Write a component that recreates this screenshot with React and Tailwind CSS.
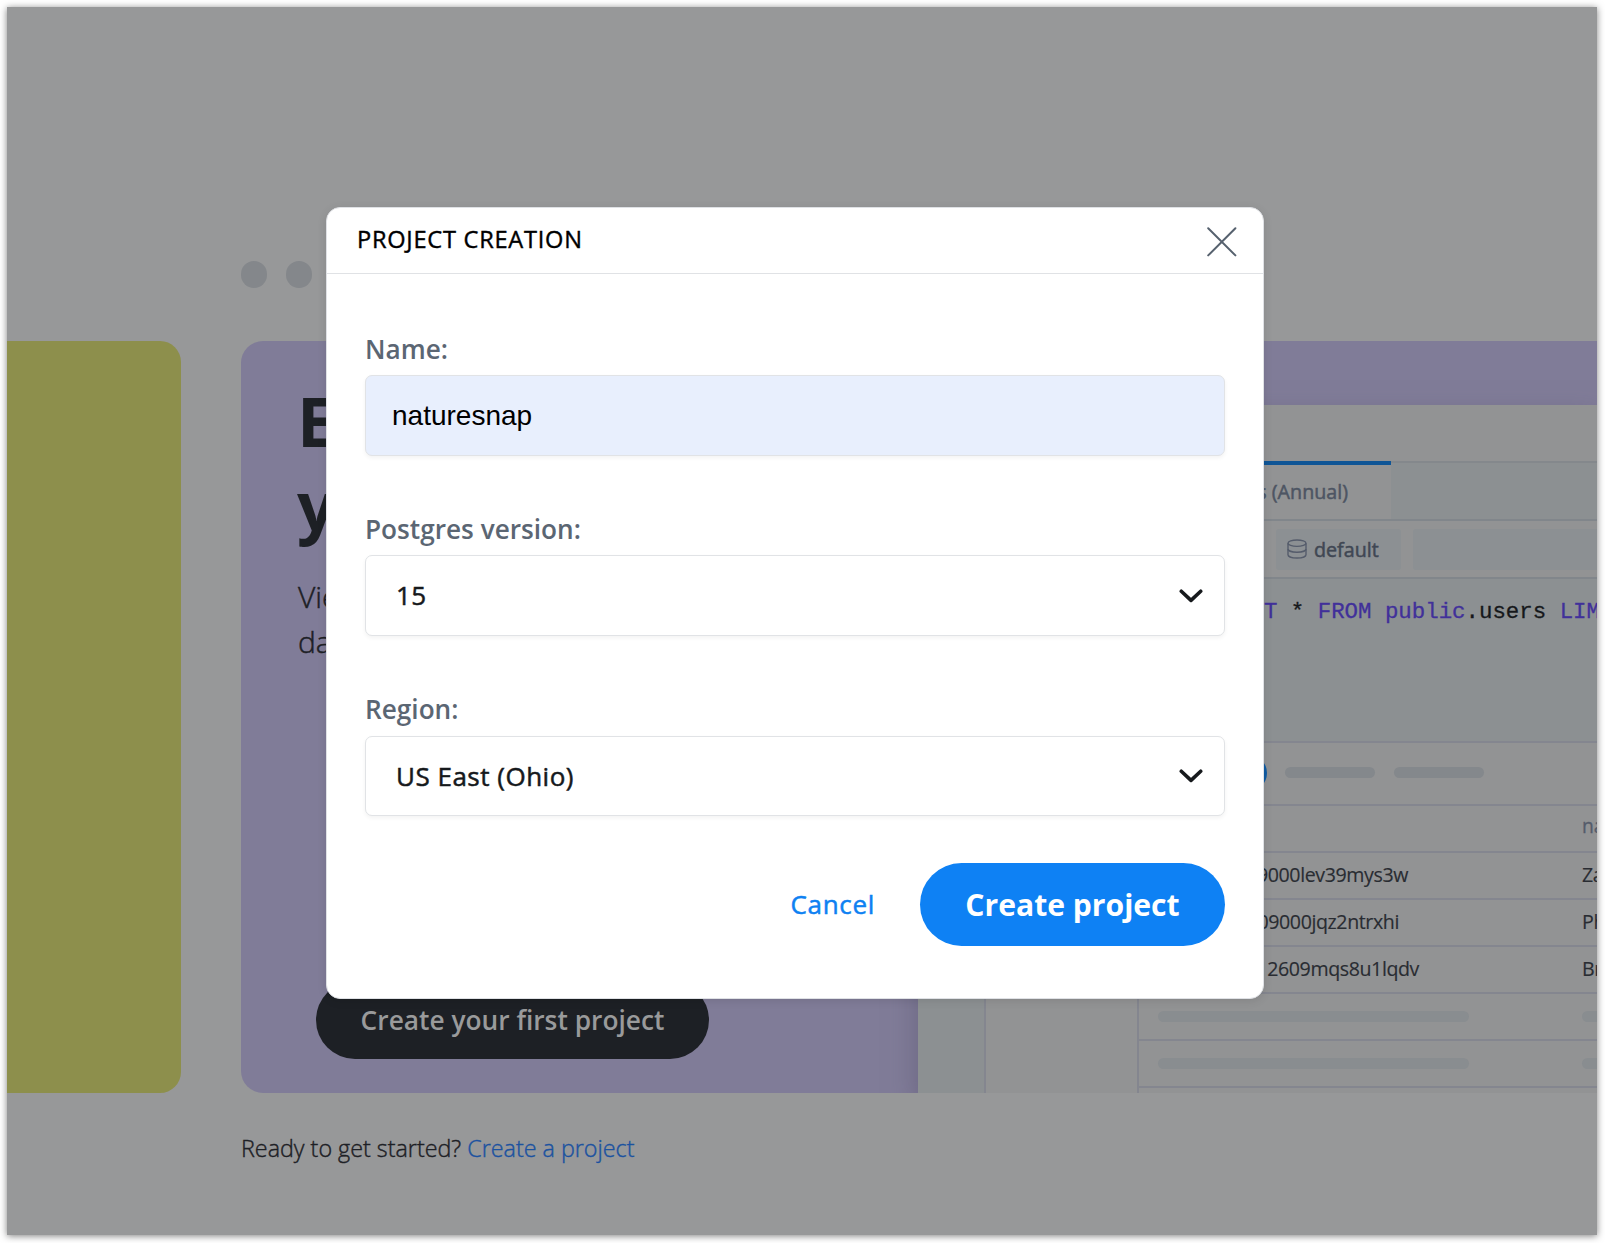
import React from "react";

const sans = "font-['Open_Sans','Noto_Sans',sans-serif]";

function Line() {
  return <div className="h-[2px] shrink-0 bg-[#84868f]" />;
}

function DatabaseIcon() {
  return (
    <svg width="20" height="20" viewBox="0 0 20 20" fill="none" stroke="#555c6b" strokeWidth="1.4" className="shrink-0">
      <ellipse cx="10" cy="4.2" rx="9" ry="3.2" />
      <path d="M1 4.2v11.6c0 1.8 4 3.2 9 3.2s9-1.4 9-3.2V4.2" />
      <path d="M1 10c0 1.8 4 3.2 9 3.2s9-1.4 9-3.2" />
    </svg>
  );
}

const rows = [
  { id: "9000lev39mys3w", pad: "pr-[51px]", name: "Zach" },
  { id: "09000jqz2ntrxhi", pad: "pr-[60px]", name: "Phil" },
  { id: "12609mqs8u1lqdv", pad: "pr-[40px]", name: "Bria" },
];

function Explorer() {
  return (
    <div className="mt-[64px] flex w-[679px] shrink-0 overflow-hidden bg-[#929394] shadow-[0_14px_26px_rgba(90,84,112,0.6)]">
      <div className="w-[68px] shrink-0 border-r-2 border-[#84868f] bg-[#8c9092]" />
      <div className="flex min-w-0 flex-1 flex-col">
        <div className="h-[56px] shrink-0" />
        <div className="flex h-[58px] shrink-0">
          <div className="flex w-[405px] items-center justify-end border-t-4 border-[#0f5596] pr-[43px] text-[19.7px] text-[#4d5563] [-webkit-text-stroke:0.5px_currentColor]">
            Users (Annual)
          </div>
          <div className="flex-1 border-t-2 border-[#84888c] bg-[#8c9092]" />
        </div>
        <div className="h-[2px] shrink-0 bg-[#81868b]" />
        <div className="flex h-[56px] shrink-0 items-center gap-[12px] pl-[290px]">
          <div className="flex h-[41px] w-[125px] items-center gap-[7px] rounded-[3px] bg-[#8c9093] pl-[11px] text-[19.7px] text-[#404753] [-webkit-text-stroke:0.5px_currentColor]">
            <DatabaseIcon />
            <span className="pt-px">default</span>
          </div>
          <div className="h-[41px] flex-1 rounded-l-[3px] bg-[#8c9093]" />
        </div>
        <div className="h-[2px] shrink-0 bg-[#81868b]" />
        <div className="h-[162px] shrink-0 whitespace-pre bg-[#8c9092] pt-[20px] pl-[278px] font-['Liberation_Mono',monospace] text-[22.4px] leading-[26px] text-[#16181b] [-webkit-text-stroke:0.3px_currentColor]">
          <span className="text-[#41309a]">T</span>
          <span> * </span>
          <span className="text-[#41309a]">FROM public</span>
          <span>.users </span>
          <span className="text-[#41309a]">LIMIT</span>
        </div>
        <Line />
        <div className="flex h-[61px] shrink-0 items-center gap-[18px] pb-[2px] pl-[245px]">
          <div className="h-[36px] w-[36px] rounded-full bg-[#0f5ba3]" />
          <div className="flex gap-[19px]">
            <div className="h-[11px] w-[90px] rounded-full bg-[#84888c]" />
            <div className="h-[11px] w-[90px] rounded-full bg-[#84888c]" />
          </div>
        </div>
        <Line />
        <div className="ml-[151px] flex min-h-0 flex-1 flex-col border-l-2 border-[#84868f]">
          <div className="flex h-[45px] shrink-0 items-center pb-[5px] pl-[443px] text-[19.3px] text-[#555c6b] [-webkit-text-stroke:0.3px_currentColor]">
            na
          </div>
          <Line />
          {rows.map((r) => (
            <React.Fragment key={r.id}>
              <div className="flex h-[45px] shrink-0 items-center pb-[2px] text-[19.6px] tracking-[-0.4px] whitespace-nowrap text-[#292c32] [-webkit-text-stroke:0.15px_currentColor]">
                <div className={`w-[320px] shrink-0 text-right ${r.pad}`}>{r.id}</div>
                <div className="w-[123px] shrink-0" />
                <div>{r.name}</div>
              </div>
              <Line />
            </React.Fragment>
          ))}
          {[0, 1].map((i) => (
            <React.Fragment key={i}>
              <div className="flex h-[45px] shrink-0 items-center gap-[113px] pl-[19px]">
                <div className="h-[11px] w-[311px] shrink-0 rounded-full bg-[#898d90]" />
                <div className="h-[11px] w-[80px] shrink-0 rounded-full bg-[#898d90]" />
              </div>
              <Line />
            </React.Fragment>
          ))}
        </div>
      </div>
    </div>
  );
}

function Chevron() {
  return (
    <svg width="24" height="14" viewBox="0 0 24 14" fill="none" stroke="#16191c" strokeWidth="3.6" strokeLinecap="round" strokeLinejoin="round">
      <path d="M2.3 2.2 12 11.4l9.7-9.2" />
    </svg>
  );
}

function Label({ children }) {
  return <div className="text-[26.2px] leading-[30px] font-semibold text-[#5b6673]">{children}</div>;
}

function Select({ label, value, className }) {
  return (
    <div>
      <Label>{label}</Label>
      <div
        className={`flex items-center justify-between rounded-[7px] border border-[#e1e3e6] bg-white pr-[21px] pl-[30px] text-[26px] tracking-[0.5px] text-[#16191c] shadow-[0_2px_4px_rgba(0,0,0,0.05)] [-webkit-text-stroke:0.5px_currentColor] ${className}`}
      >
        <span>{value}</span>
        <Chevron />
      </div>
    </div>
  );
}

function Modal() {
  return (
    <div className="absolute top-[200px] left-[319px] h-[792px] w-[938px] rounded-[14px] border border-[#dfe1e5] bg-white shadow-[0_2px_10px_rgba(0,0,0,0.1)]">
      <div className="flex h-[66px] items-center justify-between border-b border-[#e0e2e5] pr-[26px] pl-[30px]">
        <div className="pb-[2px] text-[23.6px] tracking-[0.75px] text-black [-webkit-text-stroke:0.4px_currentColor]">PROJECT CREATION</div>
        <svg width="30" height="30" viewBox="0 0 30 30" fill="none" stroke="#56616e" strokeWidth="2" strokeLinecap="round" className="mt-[2px]">
          <path d="M1.2 1.2 28.4 28.4M28.4 1.2 1.2 28.4" />
        </svg>
      </div>
      <div className="flex flex-col gap-[58px] px-[38px] pt-[60px]">
        <div>
          <Label>Name:</Label>
          <div className="mt-[11px] flex h-[81px] items-center rounded-[7px] border border-[#e1e3e6] bg-[#e8effd] pl-[26px] font-['Liberation_Sans',Arial,sans-serif] text-[28px] text-black shadow-[0_2px_4px_rgba(0,0,0,0.05)]">
            naturesnap
          </div>
        </div>
        <Select label="Postgres version:" value="15" className="mt-[11px] h-[81px]" />
        <Select label="Region:" value="US East (Ohio)" className="mt-[12px] h-[80px]" />
      </div>
      <div className="mt-[47px] flex items-center justify-end gap-[45px] pr-[38px]">
        <div className="text-[26px] tracking-[0.7px] text-[#0e81f2] [-webkit-text-stroke:0.5px_currentColor]">Cancel</div>
        <div className="flex h-[83px] w-[305px] items-center justify-center rounded-full bg-[#0e81f4] pt-px text-[30.1px] font-bold text-white">
          Create project
        </div>
      </div>
    </div>
  );
}

export default function App() {
  return (
    <div className={`h-[1243px] w-[1605px] overflow-hidden bg-white p-[7px] ${sans}`}>
      <div className="h-[1228px] w-[1590px] shadow-[0_1px_7px_rgba(0,0,0,0.5)]">
        <div className="relative h-full w-full overflow-hidden bg-[#979899]">
          <div className="flex gap-[19px] pt-[254px] pl-[234px]">
            <div className="h-[27px] w-[26px] rounded-full bg-[#84878b]" />
            <div className="h-[27px] w-[26px] rounded-full bg-[#84878b]" />
          </div>
          <div className="mt-[53px] flex h-[752px] gap-[60px]">
            <div className="w-[174px] shrink-0 rounded-r-[21px] bg-[#8d8f4c]" />
            <div className="flex w-[1356px] shrink-0 overflow-hidden rounded-l-[22px] bg-[#807c98]">
              <div className="flex w-[677px] shrink-0 flex-col pl-[56px] text-[#1d2025]">
                <div className="mt-[38px] text-[68px] leading-[84px] font-bold">
                  E<br />y
                </div>
                <div className="mt-[27px] pl-px text-[30px] leading-[45px] font-light [-webkit-text-stroke:0.45px_currentColor]">
                  Vie<br />da
                </div>
                <div className="mt-[317px] ml-[19px] flex h-[78px] w-[393px] shrink-0 items-center justify-center rounded-full bg-[#1d2025] pt-[2px] text-[26.3px] font-semibold text-[#999a9b]">
                  Create your first project
                </div>
              </div>
              <Explorer />
            </div>
          </div>
          <div className="mt-[39px] pl-[234px] text-[23.3px] leading-[32px] font-light text-[#1d2025] [-webkit-text-stroke:0.4px_currentColor]">
            Ready to get started? <span className="text-[#1b52a0]">Create a project</span>
          </div>
          <Modal />
        </div>
      </div>
    </div>
  );
}
